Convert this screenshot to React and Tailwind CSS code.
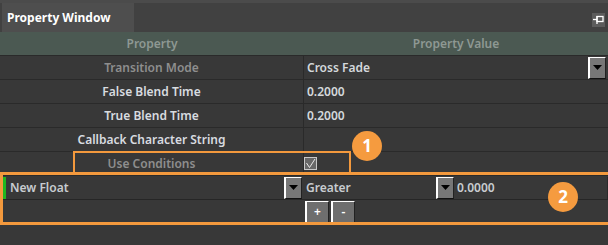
import React from "react";

function Drop({ className = "" }) {
  return (
    <div className={"w-[18px] h-[22px] bg-[#777777] border-l-2 border-t border-white border-r border-b border-r-[#222] border-b-[#111] flex items-center justify-center " + className}>
      <svg width="9" height="5" viewBox="0 0 9 5"><path d="M0 0 H9 L4.5 5 Z" fill="#000" /></svg>
    </div>
  );
}

function Row({ label, value, dim, drop, children }) {
  return (
    <div className="grid grid-cols-[304px_1fr] h-[24px] border-b border-[#2a2a2a]">
      <div className={"border-r border-[#2a2a2a] flex items-center justify-center " + (dim ? "text-[#8e8e8e]" : "text-[#d8dce0]")}>{label}</div>
      <div className="flex items-center pl-[3px] pr-[2px] text-[#d4d8dc]">
        <span className="flex-1">{value}</span>
        {drop && <Drop />}
        {children}
      </div>
    </div>
  );
}

export default function App() {
  return (
    <div className="w-[608px] h-[245px] bg-[#383838] relative overflow-hidden font-['Noto_Sans',sans-serif] text-[12px] font-semibold">
      <div className="h-[3px] bg-[#4b4b4b]" />
      <div className="h-[29px] bg-[#414141] flex justify-between">
        <div className="ml-[2px] w-[132px] h-full bg-[#4e4e4e] flex items-center pl-[5px] text-white font-bold text-[12px]">Property Window</div>
        <div className="mt-[10px] mr-[3px] w-[13px] h-[14px] bg-[#5c5c5c] flex items-center justify-center">
          <svg width="13" height="14" viewBox="0 0 13 14" fill="none" stroke="#fff" strokeWidth="1.3">
            <path d="M1 6.5 H5" />
            <rect x="5" y="3.5" width="6" height="5" />
            <path d="M5 3 V11" />
          </svg>
        </div>
      </div>
      <div className="grid grid-cols-[304px_1fr] h-[24px] bg-[#4b5952] text-[#8e9893] border-b border-[#2a2a2a]">
        <div className="flex items-center justify-center">Property</div>
        <div className="flex items-center justify-center">Property Value</div>
      </div>
      <Row label="Transition Mode" dim value="Cross Fade" drop />
      <Row label="False Blend Time" value="0.2000" />
      <Row label="True Blend Time" value="0.2000" />
      <Row label="Callback Character String" value="" />
      <Row label="Use Conditions" dim value="">
        <div className="absolute left-[304px] top-[157px] w-[13px] h-[13px] bg-[#686868] border border-[#c8c8c8] flex items-center justify-center">
          <svg width="11" height="11" viewBox="0 0 11 11" fill="none" stroke="#e8e8e8" strokeWidth="1"><path d="M1.5 5 L4.5 9.5 L10 1" /></svg>
        </div>
      </Row>
      <div className="h-[24px] flex items-center border-b border-[#262626] text-[#c8ccd0]">
        <div className="ml-[2px] w-[4px] h-[22px] bg-[#1fb81f]" />
        <span className="ml-[4px] flex-1">New Float</span>
        <Drop />
        <span className="ml-[4px] w-[130px]">Greater</span>
        <Drop />
        <div className="ml-[3px] w-[151px] h-[22px] border-r border-[#2a2a2a] flex items-center">0.0000</div>
      </div>
      <div className="h-[24px] flex items-center pl-[305px] gap-[2px] text-white">
        <div className="w-[24px] h-[22px] bg-[#6e6e6e] border-l-2 border-t border-white border-r border-b border-r-[#222] border-b-[#111] flex items-center justify-center">+</div>
        <div className="w-[24px] h-[22px] bg-[#6e6e6e] border-l-2 border-t border-white border-r border-b border-r-[#222] border-b-[#111] flex items-center justify-center">-</div>
      </div>

      <div className="absolute left-[73px] top-[151px] w-[278px] h-[24px] border-2 border-[#f3993d]" />
      <div className="absolute left-0 top-[172px] w-[620px] h-[53px] border-[3px] border-[#f3993d]" />
      <div className="absolute left-[352px] top-[131px] w-[30px] h-[30px] rounded-full bg-[#f59b3f] flex items-center justify-center text-white font-bold text-[17px]">1</div>
      <div className="absolute left-[548px] top-[182px] w-[30px] h-[30px] rounded-full bg-[#f59b3f] flex items-center justify-center text-white font-bold text-[17px]">2</div>
    </div>
  );
}
